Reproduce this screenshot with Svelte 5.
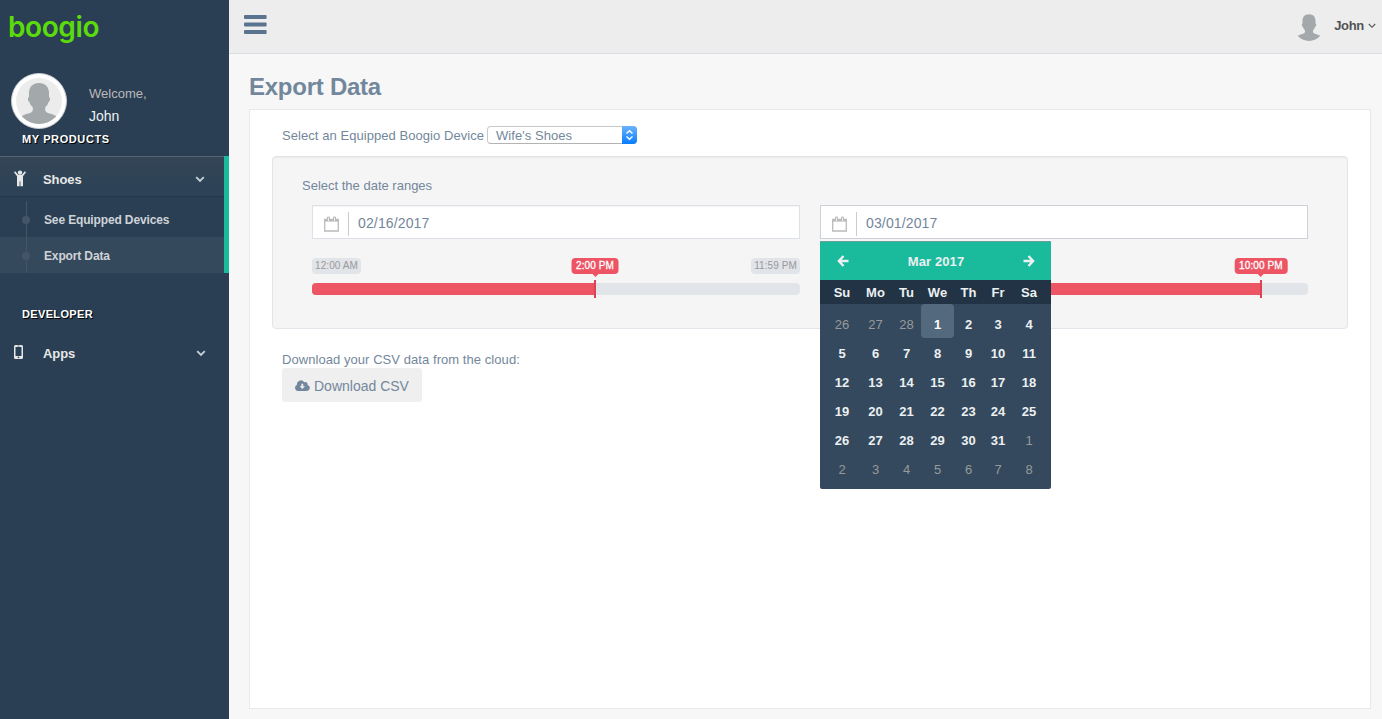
<script lang="ts">
	type Day = { n: number; muted?: boolean; active?: boolean };

	const userName = 'John';
	const devices = ["Wife's Shoes"];
	const weekdays = ['Su', 'Mo', 'Tu', 'We', 'Th', 'Fr', 'Sa'];

	let startDate = $state('02/16/2017');
	let endDate = $state('03/01/2017');

	// Six weeks starting on Feb 26
	const days: Day[] = Array.from({ length: 42 }, (_, i) => {
		if (i < 3) return { n: 26 + i, muted: true };
		if (i > 33) return { n: i - 33, muted: true };
		return { n: i - 2, active: i === 3 };
	});
</script>

{#snippet chevron()}
	<svg class="chevron" viewBox="0 0 10 7" width="10" height="7">
		<path d="M1.2 1.2 5 5 8.8 1.2" fill="none" stroke="currentColor" stroke-width="1.9" />
	</svg>
{/snippet}

{#snippet silhouette()}
	<path
		d="M23 5C29.5 5 33 9.2 33 15V19C34.6 19.3 34.2 23.6 32.4 24.2 31.8 26.6 30.6 28 29.2 29.3V32.2C29.6 35.6 36.5 35.2 41.5 39V47H4.5V39C9.5 35.2 16.4 35.6 16.8 32.2V29.3C15.4 28 14.2 26.6 13.6 24.2 11.8 23.6 11.4 19.3 13 19V15C13 9.2 16.5 5 23 5Z"
		fill="#a3a8ab"
	/>
{/snippet}

{#snippet dateField(value: string, focused: boolean)}
	<div class="date-field" class:focused>
		<span class="date-icon">
			<svg viewBox="0 0 15 16" width="15" height="16" fill="none" stroke="#bbb">
				<path d="M.7 3.5H14.3V15H.7Z" stroke-width="1.3" />
				<path d="M1 4.8H14" stroke-width="1.6" />
				<path d="M3.5 5V1H5.5V5M9.5 5V1H11.5V5" fill="#eee" />
			</svg>
		</span>
		<span class="date-value">{value}</span>
	</div>
{/snippet}

{#snippet slider(label: string, percent: number, showMax: boolean)}
	<div class="slider">
		<span class="limit">12:00 AM</span>
		{#if showMax}
			<span class="limit">11:59 PM</span>
		{/if}
		<div class="track">
			<div class="fill" style="width: {percent}%"></div>
		</div>
		<div class="handle" style="left: {percent}%"></div>
		<span class="bubble" style="left: {percent}%">{label}</span>
	</div>
{/snippet}

<div class="page">
	<aside class="sidebar">
		<div class="logo">boogio</div>

		<div class="profile">
			<svg class="avatar" viewBox="0 0 56 56" width="56" height="56">
				<defs>
					<clipPath id="avatar-clip"><circle cx="23" cy="23" r="23" /></clipPath>
				</defs>
				<circle cx="28" cy="28" r="27.5" fill="#fff" stroke="#c5cbd2" />
				<g transform="translate(5 5)" clip-path="url(#avatar-clip)">
					<rect width="46" height="46" fill="#ececec" />
					{@render silhouette()}
				</g>
			</svg>
			<div class="welcome">
				<span>Welcome,</span>
				<strong>{userName}</strong>
			</div>
		</div>

		<h3>MY PRODUCTS</h3>
		<div class="menu open">
			<div class="menu-item">
				<svg class="icon" viewBox="0 0 12 17" width="12" height="17" fill="currentColor">
					<circle cx="6" cy="2.6" r="2.2" />
					<path d="M1.2 1.2 4.2 4.8H7.8L10.8 1.2 12 2.3 9 6.2V16.2H6.4V11.4H5.6V16.2H3V6.2L0 2.3Z" />
				</svg>
				<span>Shoes</span>
				{@render chevron()}
			</div>
			<ul>
				<li>See Equipped Devices</li>
				<li class="current">Export Data</li>
			</ul>
		</div>

		<h3 class="developer">DEVELOPER</h3>
		<div class="menu">
			<div class="menu-item">
				<svg class="icon phone" viewBox="0 0 9 14" width="9" height="14">
					<path d="M1.5 0H7.5Q9 0 9 1.5V12.5Q9 14 7.5 14H1.5Q0 14 0 12.5V1.5Q0 0 1.5 0ZM1.5 2V11H7.5V2Z" fill="currentColor" fill-rule="evenodd" />
					<path d="M3.5 1H5.5" stroke="#2a3f54" stroke-width=".7" />
					<circle cx="4.5" cy="12.4" r=".8" fill="#2a3f54" />
				</svg>
				<span>Apps</span>
				{@render chevron()}
			</div>
		</div>
	</aside>

	<div class="main">
		<header>
			<svg viewBox="0 0 23 19" width="23" height="19" fill="#5a738e">
				<rect width="22.6" height="4" rx="1" />
				<rect y="7.6" width="22.6" height="4" rx="1" />
				<rect y="15" width="22.6" height="4" rx="1" />
			</svg>
			<div class="user">
				<svg viewBox="0 0 46 46" width="30" height="30">
					<defs>
						<clipPath id="user-clip"><circle cx="23" cy="23" r="23" /></clipPath>
					</defs>
					<g clip-path="url(#user-clip)">{@render silhouette()}</g>
				</svg>
				<span>{userName}</span>
				<svg class="caret" viewBox="0 0 8 6" width="8" height="6">
					<path d="M.8 1 4 4.3 7.2 1" fill="none" stroke="currentColor" stroke-width="1.1" />
				</svg>
			</div>
		</header>

		<main>
			<h1>Export Data</h1>
			<section class="panel">
				<div class="device">
					<span>Select an Equipped Boogio Device</span>
					<div class="select">
						<span>{devices[0]}</span>
						<i>
							<svg viewBox="0 0 9 12" width="9" height="12" fill="none" stroke="#fff" stroke-width="1.4">
								<path d="M1.5 4.5 4.5 1.7 7.5 4.5M1.5 7.5 4.5 10.3 7.5 7.5" />
							</svg>
						</i>
					</div>
				</div>

				<div class="well">
					<p>Select the date ranges</p>
					<div class="ranges">
						<div class="range">
							{@render dateField(startDate, false)}
							{@render slider('2:00 PM', 58, true)}
						</div>
						<div class="range">
							{@render dateField(endDate, true)}
							{@render slider('10:00 PM', 90.35, false)}

							<div class="calendar">
								<div class="month">
									<svg viewBox="0 0 12 12" width="12" height="12" fill="none" stroke="currentColor" stroke-width="2.4">
										<path d="M6.5 1 1.9 6 6.5 11M2 6H11.5" />
									</svg>
									<span>Mar 2017</span>
									<svg viewBox="0 0 12 12" width="12" height="12" fill="none" stroke="currentColor" stroke-width="2.4">
										<path d="M5.5 1 10.1 6 5.5 11M10 6H.5" />
									</svg>
								</div>
								<div class="weekdays">
									{#each weekdays as day}
										<span>{day}</span>
									{/each}
								</div>
								<div class="days">
									{#each days as day}
										<span class:muted={day.muted} class:active={day.active}>{day.n}</span>
									{/each}
								</div>
							</div>
						</div>
					</div>
				</div>

				<div class="download">
					<p>Download your CSV data from the cloud:</p>
					<button>
						<svg viewBox="0 0 15 11" width="15" height="11">
							<path d="M3.2 11A3.2 3.2 0 0 1 1.9 4.9 4 4 0 0 1 9.2 2.2 2.3 2.3 0 0 1 12.5 4.9 3.1 3.1 0 0 1 12 11Z" fill="currentColor" />
							<path d="M6.4 3.7H8.2V6.2H10L7.3 9 4.6 6.2H6.4Z" fill="#efefef" />
						</svg>
						Download CSV
					</button>
				</div>
			</section>
		</main>
	</div>
</div>

<style>
	:global(body) {
		margin: 0;
		overflow: hidden;
	}

	.page {
		display: flex;
		height: 719px;
		background: #f7f7f7;
		color: #73879c;
		font: 13px/18px 'Liberation Sans', Arial, sans-serif;
	}

	.page * {
		box-sizing: border-box;
	}

	svg {
		display: block;
		flex-shrink: 0;
	}

	p {
		margin: 0;
	}

	/* Sidebar */
	.sidebar {
		width: 229px;
		flex-shrink: 0;
		background: #2a3f54;
		color: #e7e7e7;
	}

	.logo {
		height: 73px;
		padding: 9px 0 0 8px;
		color: #5cdb0c;
		font: 600 28px/36px Inter, sans-serif;
		letter-spacing: -0.4px;
	}

	.profile {
		display: flex;
		height: 57px;
		padding-left: 11px;
	}

	.welcome {
		display: flex;
		flex-direction: column;
		padding: 12px 0 0 22px;
		color: #bab8b8;
	}

	.welcome strong {
		margin-top: 4px;
		color: #ecf0f1;
		font-size: 14px;
		font-weight: 400;
	}

	h3 {
		margin: 0;
		height: 26px;
		padding-left: 22px;
		color: #fff;
		font-size: 11px;
		line-height: 18px;
		letter-spacing: 0.6px;
		text-shadow: 1px 1px #000;
	}

	h3.developer {
		height: 28px;
		margin-top: 32px;
		letter-spacing: 0.35px;
	}

	.menu.open {
		border-right: 5px solid #1abb9c;
	}

	.menu-item {
		display: flex;
		align-items: center;
		height: 41px;
		padding-left: 14px;
		font-weight: 700;
		letter-spacing: -0.1px;
	}

	.open .menu-item {
		border-top: 1px solid #566472;
		border-bottom: 1px solid #24364a;
		background: linear-gradient(#334556, #2c4257);
		padding-top: 6px;
	}

	.menu-item .icon {
		width: 12px;
		margin-right: 17px;
	}

	.open .icon {
		margin-top: -3px;
	}

	.menu-item .phone {
		width: 9px;
		margin-right: 20px;
		margin-top: -3px;
	}

	.menu-item .chevron {
		margin: 0 19px 0 auto;
		color: #c4cfda;
	}

	.menu:not(.open) .chevron {
		margin-right: 23px;
	}

	ul {
		margin: 0;
		padding: 4px 0 0;
		list-style: none;
	}

	li {
		position: relative;
		height: 36px;
		padding-left: 44px;
		color: #cfd3d7;
		font-size: 12px;
		font-weight: 700;
		line-height: 38px;
		letter-spacing: -0.14px;
	}

	li.current {
		background: #35495d;
	}

	/* timeline dot and rail beside the submenu */
	li::before {
		content: '';
		position: absolute;
		left: 22px;
		top: 15px;
		width: 8px;
		height: 8px;
		border-radius: 50%;
		background: #425668;
	}

	li::after {
		content: '';
		position: absolute;
		left: 26px;
		top: 0;
		bottom: 0;
		border-left: 1px solid #425668;
	}

	/* Top bar */
	.main {
		flex: 1;
		min-width: 0;
	}

	header {
		display: flex;
		justify-content: space-between;
		height: 54px;
		padding: 15px 6px 0 15px;
		border-bottom: 1px solid #d9dee4;
		background: #ededed;
	}

	.user {
		display: flex;
		align-items: center;
		height: 22px;
		color: #515356;
		font-weight: 700;
		letter-spacing: -0.3px;
	}

	.user > span {
		margin: 0 4px 0 10px;
		font-size: 13px;
	}

	/* Content */
	main {
		padding: 17px 11px 0 20px;
	}

	h1 {
		margin: 0;
		height: 38px;
		font-size: 24px;
		line-height: 32px;
		letter-spacing: -0.25px;
	}

	.panel {
		height: 600px;
		padding: 16px 22px 0;
		border: 1px solid #e6e9ed;
		background: #fff;
	}

	.device {
		display: flex;
		height: 30px;
		padding-left: 10px;
	}

	.device > span {
		width: 205px;
		line-height: 20px;
		letter-spacing: 0.06px;
		white-space: nowrap;
	}

	.select {
		display: flex;
		justify-content: space-between;
		width: 150px;
		height: 18px;
		border: 1px solid #c8c8c8;
		border-bottom-color: #b3b3b3;
		border-radius: 4px;
		line-height: 17px;
		letter-spacing: 0.06px;
	}

	.select span {
		padding-left: 8px;
	}

	.select i {
		display: flex;
		align-items: center;
		justify-content: center;
		width: 15px;
		margin: -1px;
		border-radius: 0 4px 4px 0;
		background: linear-gradient(#6bb3fa, #077cff);
	}

	.well {
		height: 173px;
		padding: 20px 39px 0;
		border: 1px solid #e3e5ea;
		border-radius: 4px;
		background: #f5f5f5;
		box-shadow: inset 0 1px 1px rgba(0, 0, 0, 0.05);
	}

	.well p {
		margin-left: -10px;
	}

	.ranges {
		display: flex;
		gap: 20px;
		margin-top: 10px;
	}

	.range {
		position: relative;
		flex: 1;
	}

	.date-field {
		display: flex;
		height: 34px;
		border: 1px solid #dde2e8;
		background: #fff;
		box-shadow: inset 0 1px 1px rgba(0, 0, 0, 0.05);
		font-size: 14px;
	}

	.date-field.focused {
		border-color: #ccd0d7;
		box-shadow: none;
	}

	.date-icon {
		width: 36px;
		height: 24px;
		margin-top: 6px;
		padding: 4px 0 0 11px;
		border-right: 1px solid #ccc;
	}

	.date-value {
		padding-left: 9px;
		line-height: 34px;
		letter-spacing: 0.14px;
	}

	/* Slider */
	.slider {
		position: relative;
		display: flex;
		flex-wrap: wrap;
		justify-content: space-between;
		margin-top: 19px;
		font-size: 10px;
		line-height: 16px;
	}

	.limit {
		padding: 0 3px;
		border-radius: 4px;
		background: #e1e4e9;
		color: #999;
		letter-spacing: 0.1px;
	}

	.track {
		width: 100%;
		height: 12px;
		margin-top: 9px;
		border-radius: 4px;
		background: #e1e4e9;
		overflow: hidden;
	}

	.fill {
		height: 100%;
		background: #ed5565;
	}

	.handle {
		position: absolute;
		top: 22px;
		width: 2px;
		height: 18px;
		margin-left: -1px;
		background: #da4453;
	}

	.bubble {
		position: absolute;
		top: 0;
		padding: 0 4.5px;
		border-radius: 4px;
		background: #ed5565;
		color: #fff;
		-webkit-text-stroke: 0.3px #fff;
		letter-spacing: 0.1px;
		white-space: nowrap;
		transform: translateX(-50%);
	}

	.bubble::after {
		content: '';
		position: absolute;
		top: 16px;
		left: 50%;
		margin-left: -3px;
		border: 3px solid transparent;
		border-top-color: #ed5565;
		border-bottom: 0;
	}

	/* Calendar dropdown */
	.calendar {
		position: absolute;
		top: 36px;
		left: 0;
		width: 231px;
		height: 248px;
		border-radius: 2px;
		background: #34495e;
		color: #ecf0f1;
		font-weight: 700;
		overflow: hidden;
	}

	.month {
		display: flex;
		align-items: center;
		justify-content: space-between;
		height: 39px;
		padding: 0 16px 0 17px;
		border-top: 1px solid #6b9e94;
		background: #1abb9c;
	}

	.month span {
		padding-top: 2px;
		letter-spacing: 0.1px;
	}

	.weekdays,
	.days {
		display: grid;
		grid-template-columns: 34px 33px 29px 33px 29px 30px 32px;
		padding-left: 5px;
		text-align: center;
	}

	.weekdays {
		height: 24px;
		background: #213345;
		line-height: 25px;
	}

	.days {
		grid-template-rows: 34px;
		grid-auto-rows: 29px;
		line-height: 32px;
	}

	.days span:nth-child(-n + 7) {
		padding-top: 5px;
	}

	.days .muted {
		color: #999;
		font-weight: 400;
	}

	.days .active {
		border-radius: 4px;
		background: #53697d;
		color: #fff;
	}

	/* Download */
	.download {
		padding: 22px 0 0 10px;
	}

	.download p {
		height: 17px;
		letter-spacing: 0.06px;
	}

	button {
		display: flex;
		align-items: center;
		gap: 4px;
		width: 140px;
		height: 34px;
		padding: 1px 0 0 13px;
		border: 0;
		border-radius: 3px;
		background: #efefef;
		color: #73879c;
		font: 14px 'Liberation Sans', Arial, sans-serif;
		white-space: nowrap;
	}
</style>
